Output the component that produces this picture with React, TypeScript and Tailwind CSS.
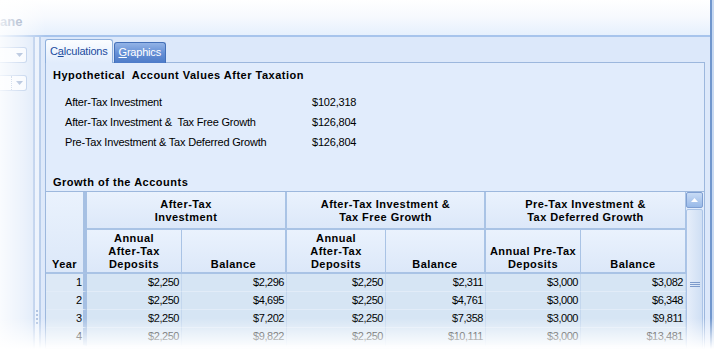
import React from "react";

const values = [
  { label: "After-Tax Investment", value: "$102,318" },
  { label: "After-Tax Investment &  Tax Free Growth", value: "$126,804" },
  { label: "Pre-Tax Investment & Tax Deferred Growth", value: "$126,804" },
];

const rows = [
  { year: 1, cells: ["$2,250", "$2,296", "$2,250", "$2,311", "$3,000", "$3,082"] },
  { year: 2, cells: ["$2,250", "$4,695", "$2,250", "$4,761", "$3,000", "$6,348"] },
  { year: 3, cells: ["$2,250", "$7,202", "$2,250", "$7,358", "$3,000", "$9,811"] },
  { year: 4, cells: ["$2,250", "$9,822", "$2,250", "$10,111", "$3,000", "$13,481"] },
];

const hdr = "bg-gradient-to-b from-[#eaf2fd] to-[#dce8f9] font-bold tracking-[0.45px] text-[11px] leading-[13px] text-black";

function Dropdown({ dotted }: { dotted?: boolean }) {
  return (
    <div className="flex h-[16px] w-[27px] rounded-r-[3px] border border-l-0 border-[#9fbae2] bg-[#f4f8fe]">
      <div className={`flex-1 ${dotted ? "border-r border-dotted border-[#7f9dcb]" : ""}`} />
      <div className="flex w-[14px] items-center justify-center">
        <svg width="7" height="4" viewBox="0 0 7 4">
          <path d="M0 0 L7 0 L3.5 4 Z" fill="#6f8dbd" />
        </svg>
      </div>
    </div>
  );
}

export default function App() {
  return (
    <div className="relative h-[349px] w-[714px] overflow-hidden bg-[#dce8fa] font-['Liberation_Sans',Arial,sans-serif] text-black">
      <div className="flex h-full">
        <div className="flex min-w-0 flex-1 flex-col">
          {/* pane header */}
          <div className="h-[37px] shrink-0 border-b-2 border-[#a7c4ec] bg-gradient-to-b from-white via-[#f6f9fe] to-[#e6f0fd] pt-[14px]">
            <span className="block text-[13px] font-bold leading-[15px] text-[#6a7fa5]">ane</span>
          </div>

          <div className="flex min-h-0 flex-1">
            {/* left pane */}
            <div className="flex w-[33px] shrink-0 flex-col gap-[12px] bg-[#d9e6f8] pt-[10px]">
              <Dropdown />
              <Dropdown dotted />
            </div>

            {/* splitter */}
            <div className="flex w-[8px] shrink-0 flex-col items-center border-x-2 border-[#b1c8e9] bg-[#e9f1fc] pt-[273px]">
              <div className="flex flex-col gap-[2px]">
                {[0, 1, 2, 3].map((i) => (
                  <div key={i} className="h-[2px] w-[2px] bg-[#9fb7dc]" />
                ))}
              </div>
            </div>

            {/* main */}
            <div className="flex min-w-0 flex-1 flex-col pl-[4px] pr-[5px] pt-[2px]">
              {/* tabs */}
              <div className="relative z-10 -mb-px flex h-[24px] shrink-0 items-end gap-[1px]">
                <div className="flex h-[24px] items-center rounded-t-[3px] border border-b-0 border-[#8fb0dc] bg-gradient-to-b from-[#fbfdff] to-[#e1ecfc] px-[4px] pb-[1px] text-[11px] tracking-[-0.2px] text-[#1b4c9e]">
                  C<u>a</u>lculations
                </div>
                <div className="flex h-[21px] items-center rounded-t-[3px] border border-b-0 border-[#4470b8] bg-gradient-to-b from-[#93b3e6] via-[#6690d6] to-[#4d7bc8] px-[4px] pb-[1px] text-[11px] tracking-[-0.2px] text-white">
                  <u>G</u>raphics
                </div>
              </div>

              {/* panel */}
              <div className="flex min-h-0 flex-1 flex-col border border-[#9cb7dd] bg-[#e1ecfc]">
                <div className="whitespace-pre pl-[7px] pt-[6px] text-[11px] font-bold leading-[13px] tracking-[0.5px]">
                  Hypothetical  Account Values After Taxation
                </div>

                <div className="mt-[10px] pl-[19px] text-[11px] tracking-[-0.2px]">
                  {values.map((v) => (
                    <div key={v.label} className="flex h-[20px] items-center">
                      <span className="w-[247px] whitespace-pre">{v.label}</span>
                      <span>{v.value}</span>
                    </div>
                  ))}
                </div>

                <div className="mt-[24px] h-[13px] pl-[7px] text-[11px] font-bold leading-[13px] tracking-[0.5px]">
                  Growth of the Accounts
                </div>

                <div className="mt-[2px] flex border-t border-[#9db8dd]">
                  <div className="grid w-[640px] shrink-0 grid-cols-[41px_95px_105px_99px_100px_95px_105px] grid-rows-[38px_44px_18px_18px_18px_18px]">
                    {/* header row 1 */}
                    <div className={`row-span-2 flex items-end justify-center border-b-2 border-r-[4px] border-b-[#a9c3e5] border-r-[#a6c0e3] pb-[1px] ${hdr}`}>
                      Year
                    </div>
                    <div className={`col-span-2 flex flex-col items-center justify-center border-b-2 border-r-2 border-[#a9c3e5] pt-[1px] ${hdr}`}>
                      <span>After-Tax</span>
                      <span>Investment</span>
                    </div>
                    <div className={`col-span-2 flex flex-col items-center justify-center border-b-2 border-r-2 border-[#a9c3e5] pt-[1px] ${hdr}`}>
                      <span>After-Tax Investment &amp;</span>
                      <span>Tax Free Growth</span>
                    </div>
                    <div className={`col-span-2 flex flex-col items-center justify-center border-b-2 border-r border-[#a9c3e5] pt-[1px] ${hdr}`}>
                      <span>Pre-Tax Investment &amp;</span>
                      <span>Tax Deferred Growth</span>
                    </div>

                    {/* header row 2 */}
                    <div className={`flex flex-col items-center justify-end border-b-2 border-r border-[#a9c3e5] pb-[1px] ${hdr}`}>
                      <span>Annual</span>
                      <span>After-Tax</span>
                      <span>Deposits</span>
                    </div>
                    <div className={`flex flex-col items-center justify-end border-b-2 border-r-2 border-[#a9c3e5] pb-[1px] ${hdr}`}>
                      <span>Balance</span>
                    </div>
                    <div className={`flex flex-col items-center justify-end border-b-2 border-r border-[#a9c3e5] pb-[1px] ${hdr}`}>
                      <span>Annual</span>
                      <span>After-Tax</span>
                      <span>Deposits</span>
                    </div>
                    <div className={`flex flex-col items-center justify-end border-b-2 border-r-2 border-[#a9c3e5] pb-[1px] ${hdr}`}>
                      <span>Balance</span>
                    </div>
                    <div className={`flex flex-col items-center justify-end border-b-2 border-r border-[#a9c3e5] pb-[1px] ${hdr}`}>
                      <span>Annual Pre-Tax</span>
                      <span>Deposits</span>
                    </div>
                    <div className={`flex flex-col items-center justify-end border-b-2 border-r border-[#a9c3e5] pb-[1px] ${hdr}`}>
                      <span>Balance</span>
                    </div>

                    {/* data */}
                    {rows.map((r) => (
                      <React.Fragment key={r.year}>
                        <div className="flex items-center justify-end border-b border-r-[4px] border-b-[#e2ecf8] border-r-[#a6c0e3] bg-[#dde9f6] pr-[1px] text-[11px]">
                          {r.year}
                        </div>
                        {r.cells.map((c, i) => (
                          <div
                            key={i}
                            className="flex items-center justify-end border-b border-r border-b-[#e2ecf8] border-r-[#c4d7ee] bg-[#d6e5f4] pr-[2px] text-[11px] tracking-[-0.45px]"
                          >
                            {c}
                          </div>
                        ))}
                      </React.Fragment>
                    ))}
                  </div>

                  {/* scrollbar */}
                  <div className="flex w-[17px] shrink-0 flex-col">
                    <div className="flex h-[16px] items-center justify-center rounded-[2px] border border-[#7f9fd2] bg-gradient-to-b from-[#c8dbf5] to-[#98b9e8]">
                      <svg width="7" height="4" viewBox="0 0 7 4">
                        <path d="M0 4 L3.5 0 L7 4 Z" fill="#ffffff" />
                      </svg>
                    </div>
                    <div className="mt-[1px] flex h-[140px] flex-col items-center gap-[1px] rounded-[2px] border border-[#abc4e7] bg-gradient-to-r from-[#e6eefa] to-[#cfdff4] pt-[72px]">
                      <div className="h-[1px] w-[10px] bg-[#7d9bcb]" />
                      <div className="h-[1px] w-[10px] bg-[#7d9bcb]" />
                      <div className="h-[1px] w-[10px] bg-[#7d9bcb]" />
                    </div>
                  </div>
                </div>
              </div>
            </div>
          </div>
        </div>

        {/* window edge */}
        <div className="w-[4px] shrink-0 border-l-2 border-[#7197cd] bg-[#c7d9f2]" />
      </div>

      {/* fades over the screenshot edges */}
      <div className="pointer-events-none absolute inset-y-0 left-0 w-[46px] bg-gradient-to-r from-white/85 via-white/50 to-transparent" />
      <div className="pointer-events-none absolute inset-x-0 bottom-0 h-[31px] bg-gradient-to-b from-transparent to-white" />
    </div>
  );
}
